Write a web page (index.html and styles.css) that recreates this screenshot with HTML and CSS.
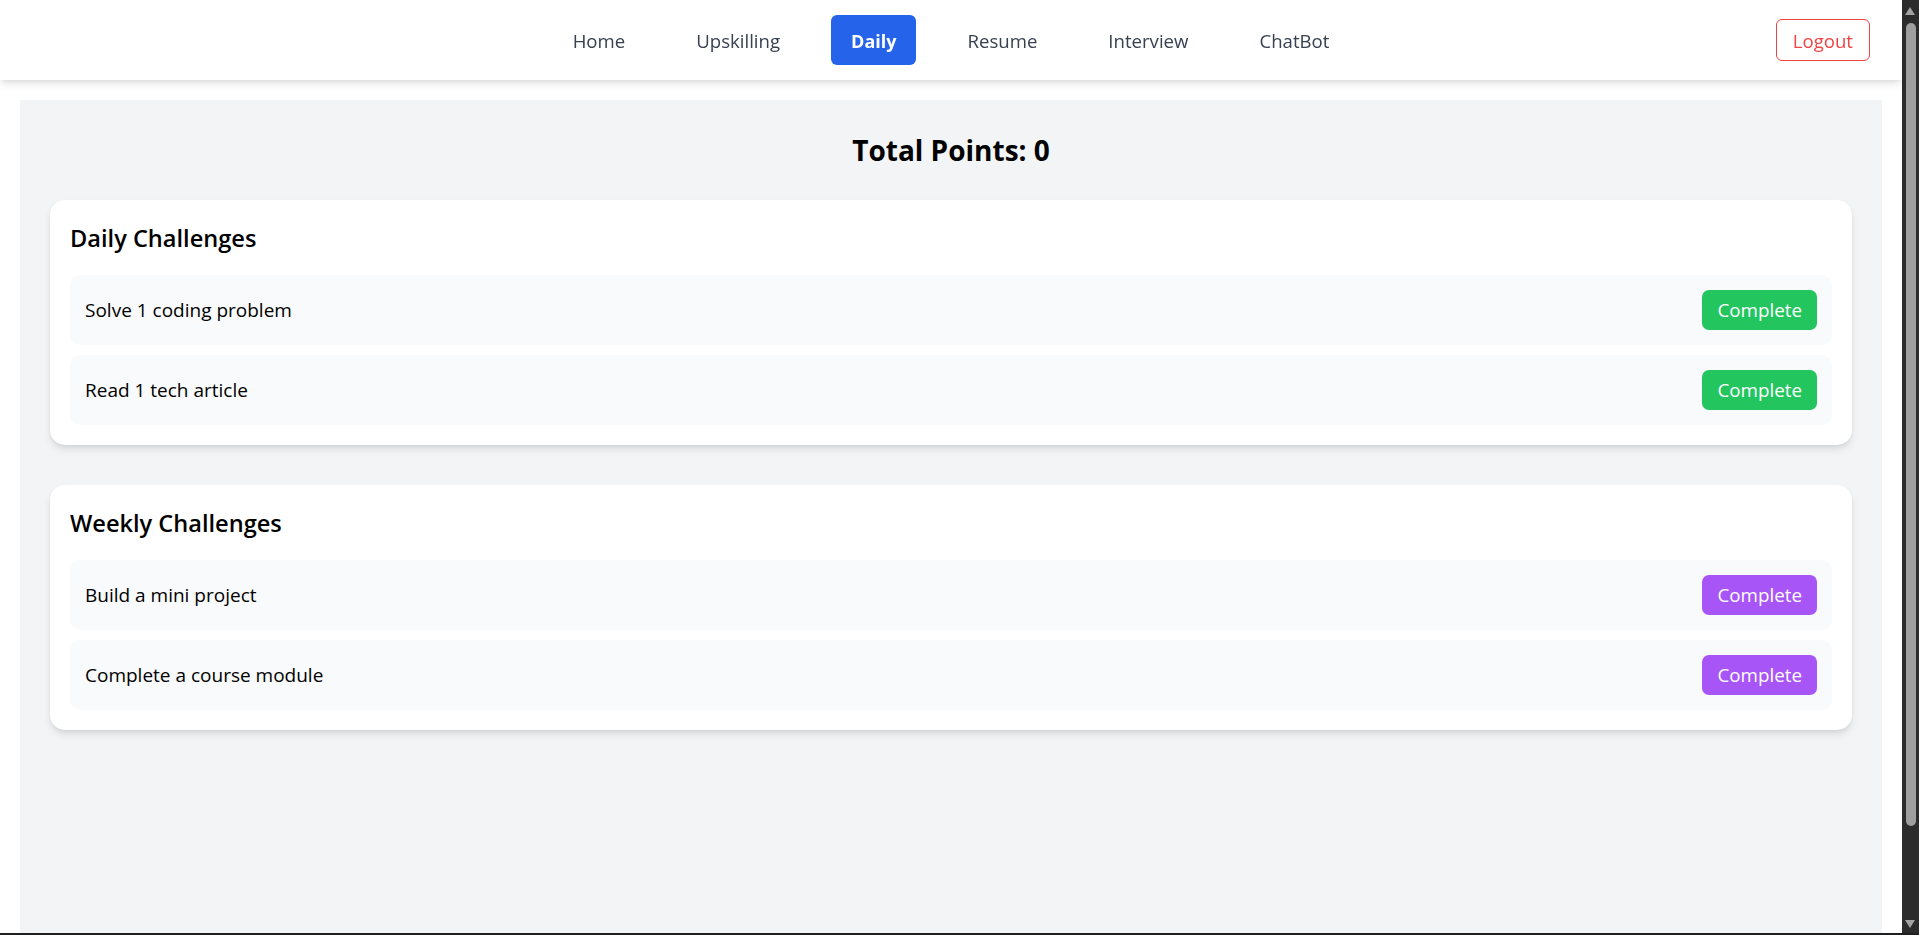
FILE: index.html
```html
<!DOCTYPE html>
<html lang="en">
<head>
<meta charset="utf-8">
<title>Daily Challenges</title>
<link rel="stylesheet" href="styles.css">
</head>
<body>
<div class="app">
  <nav class="navbar">
    <div class="nav-spacer"></div>
    <div class="nav-links">
      <a class="nav-link">Home</a>
      <a class="nav-link">Upskilling</a>
      <a class="nav-link active">Daily</a>
      <a class="nav-link">Resume</a>
      <a class="nav-link">Interview</a>
      <a class="nav-link">ChatBot</a>
    </div>
    <div class="nav-right">
      <button class="logout">Logout</button>
    </div>
  </nav>

  <main class="main">
    <h1 class="points">Total Points: 0</h1>

    <section class="card">
      <h2 class="card-title">Daily Challenges</h2>
      <div class="rows">
        <div class="row"><span class="row-text">Solve 1 coding problem</span><button class="btn btn-green">Complete</button></div>
        <div class="row"><span class="row-text">Read 1 tech article</span><button class="btn btn-green">Complete</button></div>
      </div>
    </section>

    <section class="card">
      <h2 class="card-title">Weekly Challenges</h2>
      <div class="rows">
        <div class="row"><span class="row-text">Build a mini project</span><button class="btn btn-purple">Complete</button></div>
        <div class="row"><span class="row-text">Complete a course module</span><button class="btn btn-purple">Complete</button></div>
      </div>
    </section>
  </main>
</div>

<div class="scrollbar">
  <div class="sb-up"></div>
  <div class="sb-thumb"></div>
  <div class="sb-down"></div>
</div>
<div class="bottom-edge"></div>
</body>
</html>
```

FILE: styles.css
```css
html, body {
  margin: 0;
  padding: 0;
  height: 100%;
  overflow: hidden;
  background: #ffffff;
}

body {
  font-family: "Open Sans", "Noto Sans", sans-serif;
  color: #000000;
  font-size: 19px;
}

.app {
  margin-right: 17px;
}

.navbar {
  height: 80px;
  background: #ffffff;
  box-shadow: 0 5px 8px -1px rgba(0, 0, 0, 0.1), 0 2px 5px -2px rgba(0, 0, 0, 0.1);
  display: grid;
  grid-template-columns: 1fr auto 1fr;
  align-items: center;
  padding: 0 32px;
  position: relative;
  z-index: 1;
}

.nav-links {
  display: flex;
  gap: 31px;
  align-items: center;
}

.nav-link {
  font-size: 18.6px;
  line-height: 28px;
  padding: 12px 20px 10px;
  color: #374151;
  border-radius: 6px;
  text-decoration: none;
}

.nav-link.active {
  background: #2563eb;
  color: #ffffff;
  font-weight: 700;
  font-size: 18px;
}

.nav-right {
  display: flex;
  justify-content: flex-end;
}

.logout {
  font-family: inherit;
  font-size: 18.6px;
  line-height: 28px;
  padding: 7px 16px 5px;
  color: #ef4444;
  background: #ffffff;
  border: 1px solid #ef4444;
  border-radius: 6px;
}

.main {
  margin: 20px 20px 0;
  background: #f3f4f6;
  padding: 30px;
  min-height: 900px;
}

.points {
  margin: 0 0 30px;
  text-align: center;
  font-size: 28px;
  line-height: 40px;
  font-weight: 700;
}

.card {
  background: #ffffff;
  border-radius: 15px;
  padding: 20px;
  margin-bottom: 40px;
  box-shadow: 0 5px 8px -1px rgba(0, 0, 0, 0.1), 0 2px 5px -2px rgba(0, 0, 0, 0.1);
}

.card-title {
  margin: 0 0 19px;
  padding-top: 1px;
  font-size: 23.6px;
  line-height: 35px;
  font-weight: 600;
}

.rows {
  display: flex;
  flex-direction: column;
  gap: 10px;
}

.row {
  display: flex;
  justify-content: space-between;
  align-items: center;
  background: #f9fafb;
  border-radius: 10px;
  padding: 15px;
}

.row-text {
  line-height: 30px;
}

.btn {
  font-family: inherit;
  font-size: 18.8px;
  line-height: 30px;
  padding: 5px 15px;
  border: none;
  border-radius: 7px;
  color: #ffffff;
}

.btn-green {
  background: #22c55e;
}

.btn-purple {
  background: #a855f7;
}

.scrollbar {
  position: fixed;
  top: 0;
  right: 0;
  bottom: 0;
  width: 17px;
  background: #2c2c2c;
}

.sb-up,
.sb-down {
  position: absolute;
  left: 3px;
  width: 0;
  height: 0;
  border-left: 5.5px solid transparent;
  border-right: 5.5px solid transparent;
}

.sb-up {
  top: 7px;
  border-bottom: 8px solid #a3a3a3;
}

.sb-down {
  bottom: 7px;
  border-top: 8px solid #a3a3a3;
}

.sb-thumb {
  position: absolute;
  top: 23px;
  left: 4px;
  width: 10px;
  height: 803px;
  border-radius: 5px;
  background: #9f9f9f;
}

.bottom-edge {
  position: fixed;
  left: 0;
  right: 0;
  bottom: 0;
  height: 2px;
  background: #1f1f1f;
}
```
